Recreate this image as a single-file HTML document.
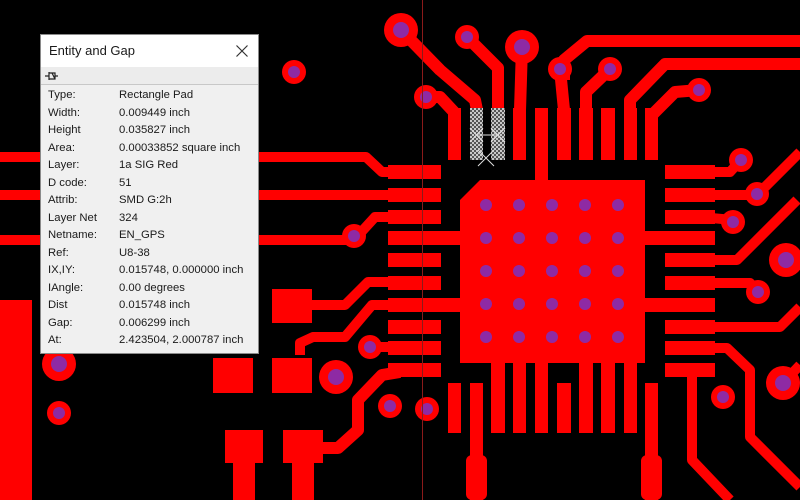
<!DOCTYPE html>
<html><head><meta charset="utf-8"><style>
html,body{margin:0;padding:0;background:#000;width:800px;height:500px;overflow:hidden}
svg{position:absolute;left:0;top:0}
.dlg{position:absolute;left:40px;top:34px;width:219px;height:320px;background:#f0f0f0;border:1px solid #8a8a8a;box-sizing:border-box;font-family:"Liberation Sans",sans-serif;color:#1a1a1a}
.tb{height:32px;background:#fff;position:relative}
.tb span{position:absolute;left:8px;top:8px;font-size:13px}
.tool{height:17px;border-bottom:1px solid #c8c8c8;background:#ececec;position:relative}
.rows{position:relative;top:2px}
.r{position:absolute;left:7px;font-size:11.3px;height:17px;line-height:17px;white-space:nowrap}
.r b{font-weight:normal;display:inline-block;width:71px}
</style></head><body>
<svg width="800" height="500" viewBox="0 0 800 500">
<defs>
<pattern id="chk" width="4" height="4" patternUnits="userSpaceOnUse"><rect width="4" height="4" fill="#c8c8c8"/><rect width="2" height="2" fill="#555"/><rect x="2" y="2" width="2" height="2" fill="#555"/></pattern>
</defs>
<g fill="none" stroke="#f00" stroke-width="12" stroke-linejoin="round">
<path d="M401 30 L440 70 L475 100 L477 110"/>
<path d="M467 37 L498 68 L498 110"/>
<path d="M522 47 L520 110"/>
<path d="M426 97 L440 97 L454 112 L454 110"/>
<path d="M560 69 L564 110"/>
<path d="M610 69 L586 92 L586 110"/>
<path d="M564 80 L564 60 L587 41 L800 41"/>
<path d="M630 110 L630 100 L665 64 L800 64"/>
<path d="M652 110 L652 115 L675 92 L699 90"/>
<path d="M0 157 L366 157 L382 172 L400 172" stroke-width="10"/>
<path d="M0 195 L400 195" stroke-width="10"/>
<path d="M0 240 L354 240 L375 217 L400 217" stroke-width="10"/>
<path d="M300 305 L345 305 L368 282 L400 282" stroke-width="10"/>
<path d="M300 355 L300 343 L313 337 L345 337 L372 305 L400 305" stroke-width="10"/>
<path d="M370 347 L400 347" stroke-width="10"/>
<path d="M320 448 L338 448 L358 430 L358 400 L382 375 L400 372" stroke-width="12"/>
<path d="M700 172 L730 172 L741 160" stroke-width="10"/>
<path d="M700 195 L757 195 L800 152" stroke-width="10"/>
<path d="M700 217 L733 220" stroke-width="10"/>
<path d="M700 260 L737 260 L797 200" stroke-width="10"/>
<path d="M700 283 L750 283 L758 292" stroke-width="10"/>
<path d="M700 327 L780 327 L800 307" stroke-width="10"/>
<path d="M700 348 L727 348 L750 370 L750 437 L800 487" stroke-width="10"/>
<path d="M692 372 L692 460 L730 500" stroke-width="10"/>
<path d="M783 383 L800 365" stroke-width="10"/>
</g>
<g fill="#f00">
<path d="M480 180 L645 180 L645 363 L460 363 L460 200 Z"/>
<rect x="448" y="108" width="13" height="52"/>
<rect x="513" y="108" width="13" height="52"/>
<rect x="535" y="108" width="13" height="75"/>
<rect x="557" y="108" width="14" height="52"/>
<rect x="579" y="108" width="14" height="52"/>
<rect x="601" y="108" width="14" height="52"/>
<rect x="624" y="108" width="13" height="52"/>
<rect x="645" y="108" width="13" height="52"/>
<rect x="448" y="383" width="13" height="50"/>
<rect x="470" y="383" width="13" height="117"/>
<rect x="466" y="455" width="21" height="45" rx="6"/>
<rect x="491" y="363" width="14" height="70"/>
<rect x="513" y="363" width="13" height="70"/>
<rect x="535" y="363" width="13" height="70"/>
<rect x="557" y="383" width="14" height="50"/>
<rect x="579" y="363" width="14" height="70"/>
<rect x="601" y="363" width="14" height="70"/>
<rect x="624" y="363" width="13" height="70"/>
<rect x="645" y="383" width="13" height="117"/>
<rect x="641" y="455" width="21" height="45" rx="6"/>
<rect x="388" y="165" width="53" height="14"/>
<rect x="388" y="188" width="53" height="14"/>
<rect x="388" y="210" width="53" height="14"/>
<rect x="388" y="231" width="72" height="14"/>
<rect x="388" y="253" width="53" height="14"/>
<rect x="388" y="276" width="53" height="14"/>
<rect x="388" y="298" width="72" height="14"/>
<rect x="388" y="320" width="53" height="14"/>
<rect x="388" y="341" width="53" height="14"/>
<rect x="388" y="363" width="53" height="14"/>
<rect x="665" y="165" width="50" height="14"/>
<rect x="665" y="188" width="50" height="14"/>
<rect x="665" y="210" width="50" height="14"/>
<rect x="640" y="231" width="75" height="14"/>
<rect x="665" y="253" width="50" height="14"/>
<rect x="665" y="276" width="50" height="14"/>
<rect x="640" y="298" width="75" height="14"/>
<rect x="665" y="320" width="50" height="14"/>
<rect x="665" y="341" width="50" height="14"/>
<rect x="665" y="363" width="50" height="14"/>
<rect x="0" y="300" width="32" height="200"/>
<rect x="272" y="289" width="40" height="34"/>
<rect x="213" y="358" width="40" height="35"/>
<rect x="272" y="358" width="40" height="35"/>
<rect x="225" y="430" width="38" height="33"/>
<rect x="283" y="430" width="40" height="33"/>
<rect x="233" y="460" width="22" height="40"/>
<rect x="292" y="460" width="22" height="40"/>
</g>
<rect x="470" y="108" width="13" height="52" fill="url(#chk)"/>
<rect x="491" y="108" width="14" height="52" fill="url(#chk)"/>
<g stroke="#ddd" stroke-width="1"><path d="M470 128 L483 142 M483 128 L470 142 M491 128 L505 142 M505 128 L491 142 M477 135 L498 135 M478 150 L494 166 M494 150 L478 166"/></g>
<g fill="#f00">
<circle cx="401" cy="30" r="17"/><circle cx="467" cy="37" r="12"/><circle cx="522" cy="47" r="17"/>
<circle cx="294" cy="72" r="12"/><circle cx="426" cy="97" r="12"/><circle cx="560" cy="69" r="12"/>
<circle cx="610" cy="69" r="12"/><circle cx="699" cy="90" r="12"/><circle cx="741" cy="160" r="12"/>
<circle cx="757" cy="194" r="12"/><circle cx="733" cy="222" r="12"/><circle cx="786" cy="260" r="17"/>
<circle cx="758" cy="292" r="12"/><circle cx="723" cy="397" r="12"/><circle cx="783" cy="383" r="17"/>
<circle cx="354" cy="236" r="12"/><circle cx="336" cy="377" r="17"/><circle cx="370" cy="347" r="12"/>
<circle cx="390" cy="406" r="12"/><circle cx="427" cy="409" r="12"/><circle cx="59" cy="364" r="17"/><circle cx="59" cy="413" r="12"/>
</g>
<g fill="#8e2aa4">
<circle cx="401" cy="30" r="8"/><circle cx="467" cy="37" r="6"/><circle cx="522" cy="47" r="8"/>
<circle cx="294" cy="72" r="6"/><circle cx="426" cy="97" r="6"/><circle cx="560" cy="69" r="6"/>
<circle cx="610" cy="69" r="6"/><circle cx="699" cy="90" r="6"/><circle cx="741" cy="160" r="6"/>
<circle cx="757" cy="194" r="6"/><circle cx="733" cy="222" r="6"/><circle cx="786" cy="260" r="8"/>
<circle cx="758" cy="292" r="6"/><circle cx="723" cy="397" r="6"/><circle cx="783" cy="383" r="8"/>
<circle cx="354" cy="236" r="6"/><circle cx="336" cy="377" r="8"/><circle cx="370" cy="347" r="6"/>
<circle cx="390" cy="406" r="6"/><circle cx="427" cy="409" r="6"/><circle cx="59" cy="364" r="8"/><circle cx="59" cy="413" r="6"/>
<g>
<circle cx="486" cy="205" r="6"/><circle cx="519" cy="205" r="6"/><circle cx="552" cy="205" r="6"/><circle cx="585" cy="205" r="6"/><circle cx="618" cy="205" r="6"/>
<circle cx="486" cy="238" r="6"/><circle cx="519" cy="238" r="6"/><circle cx="552" cy="238" r="6"/><circle cx="585" cy="238" r="6"/><circle cx="618" cy="238" r="6"/>
<circle cx="486" cy="271" r="6"/><circle cx="519" cy="271" r="6"/><circle cx="552" cy="271" r="6"/><circle cx="585" cy="271" r="6"/><circle cx="618" cy="271" r="6"/>
<circle cx="486" cy="304" r="6"/><circle cx="519" cy="304" r="6"/><circle cx="552" cy="304" r="6"/><circle cx="585" cy="304" r="6"/><circle cx="618" cy="304" r="6"/>
<circle cx="486" cy="337" r="6"/><circle cx="519" cy="337" r="6"/><circle cx="552" cy="337" r="6"/><circle cx="585" cy="337" r="6"/><circle cx="618" cy="337" r="6"/>
</g>
</g>
<line x1="422.5" y1="0" x2="422.5" y2="500" stroke="#8b1a1a" stroke-width="1"/>
</svg>
<div class="dlg">
<div class="tb"><span>Entity and Gap</span><svg width="14" height="14" style="left:194px;top:9px"><path d="M1.5 1.5 L12.5 12.5 M12.5 1.5 L1.5 12.5" stroke="#333" stroke-width="1.2"/></svg></div>
<div class="tool"><svg width="16" height="12" style="left:3px;top:3px"><path d="M1 6 H5 M5 2 V10 M5 3 H11 V9 H5 M8 3 L11 9 M11 6 H14" stroke="#222" fill="none" stroke-width="1.2"/></svg></div>
<div class="rows">
<div class="r" style="top:0"><b>Type:</b>Rectangle Pad</div>
<div class="r" style="top:17.5px"><b>Width:</b>0.009449 inch</div>
<div class="r" style="top:35px"><b>Height</b>0.035827 inch</div>
<div class="r" style="top:52.5px"><b>Area:</b>0.00033852 square inch</div>
<div class="r" style="top:70px"><b>Layer:</b>1a SIG Red</div>
<div class="r" style="top:87.5px"><b>D code:</b>51</div>
<div class="r" style="top:105px"><b>Attrib:</b>SMD G:2h</div>
<div class="r" style="top:122.5px"><b>Layer Net</b>324</div>
<div class="r" style="top:140px"><b>Netname:</b>EN_GPS</div>
<div class="r" style="top:157.5px"><b>Ref:</b>U8-38</div>
<div class="r" style="top:175px"><b>IX,IY:</b>0.015748, 0.000000 inch</div>
<div class="r" style="top:192.5px"><b>IAngle:</b>0.00 degrees</div>
<div class="r" style="top:210px"><b>Dist</b>0.015748 inch</div>
<div class="r" style="top:227.5px"><b>Gap:</b>0.006299 inch</div>
<div class="r" style="top:245px"><b>At:</b>2.423504, 2.000787 inch</div>
</div>
</div>
</body></html>
